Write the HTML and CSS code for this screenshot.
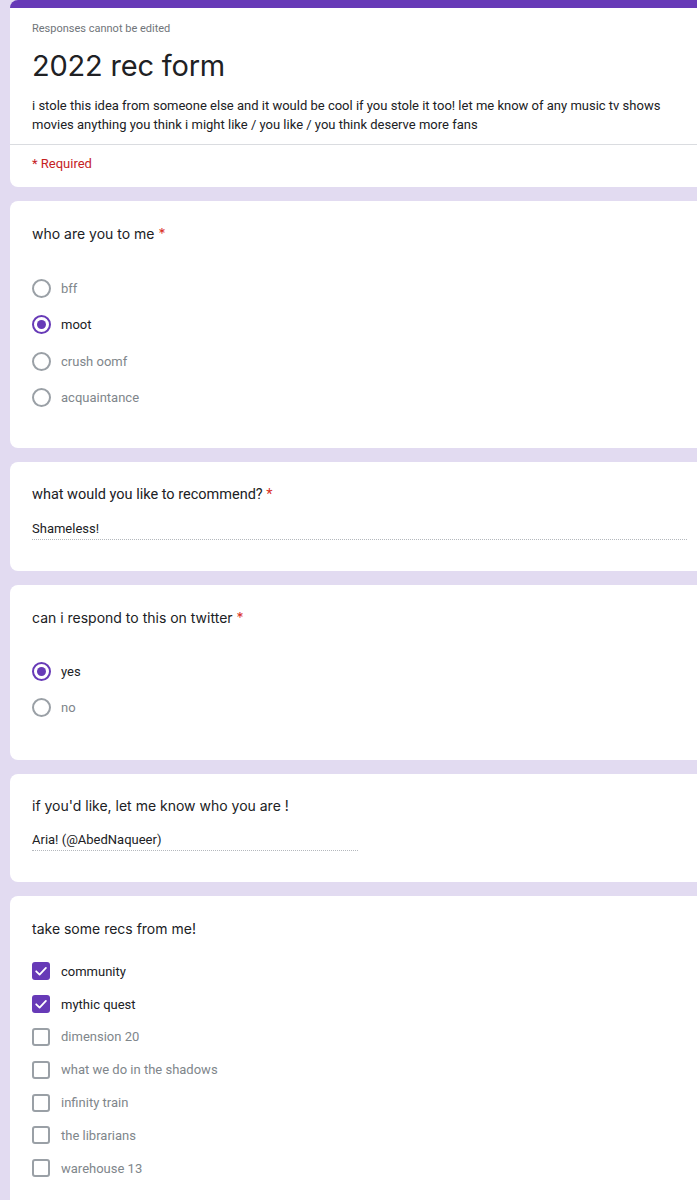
FILE: index.html
```html
<!DOCTYPE html>
<html>
<head>
<meta charset="utf-8">
<link rel="stylesheet" href="styles.css">
</head>
<body>
<main class="form">
  <section class="card card-head">
    <div class="head-top">
      <p class="note">Responses cannot be edited</p>
      <h1 class="title">2022 rec form</h1>
      <p class="desc">i stole this idea from someone else and it would be cool if you stole it too! let me know of any music tv shows movies anything you think i might like / you like / you think deserve more fans</p>
    </div>
    <div class="head-bottom">
      <p class="required">* Required</p>
    </div>
  </section>

  <section class="card q-radio q-who">
    <h2 class="question">who are you to me <span class="star">*</span></h2>
    <ul class="options">
      <li class="option"><span class="radio"></span><span class="label">bff</span></li>
      <li class="option selected"><span class="radio"></span><span class="label">moot</span></li>
      <li class="option"><span class="radio"></span><span class="label">crush oomf</span></li>
      <li class="option"><span class="radio"></span><span class="label">acquaintance</span></li>
    </ul>
  </section>

  <section class="card q-text q-rec">
    <h2 class="question roboto">what would you like to recommend? <span class="star">*</span></h2>
    <div class="answer long">Shameless!</div>
  </section>

  <section class="card q-radio q-twitter">
    <h2 class="question">can i respond to this on twitter <span class="star">*</span></h2>
    <ul class="options">
      <li class="option selected"><span class="radio"></span><span class="label">yes</span></li>
      <li class="option"><span class="radio"></span><span class="label">no</span></li>
    </ul>
  </section>

  <section class="card q-text q-who2">
    <h2 class="question">if you'd like, let me know who you are !</h2>
    <div class="answer short">Aria! (@AbedNaqueer)</div>
  </section>

  <section class="card q-check">
    <h2 class="question">take some recs from me!</h2>
    <ul class="checks">
      <li class="check checked"><span class="box"><svg viewBox="0 0 18 18" width="18" height="18"><path d="M4.2 9.3 L7.6 12.6 L13.9 5.9" fill="none" stroke="#fff" stroke-width="1.8" stroke-linecap="round" stroke-linejoin="round"/></svg></span><span class="label">community</span></li>
      <li class="check checked"><span class="box"><svg viewBox="0 0 18 18" width="18" height="18"><path d="M4.2 9.3 L7.6 12.6 L13.9 5.9" fill="none" stroke="#fff" stroke-width="1.8" stroke-linecap="round" stroke-linejoin="round"/></svg></span><span class="label">mythic quest</span></li>
      <li class="check"><span class="box"></span><span class="label">dimension 20</span></li>
      <li class="check"><span class="box"></span><span class="label">what we do in the shadows</span></li>
      <li class="check"><span class="box"></span><span class="label">infinity train</span></li>
      <li class="check"><span class="box"></span><span class="label">the librarians</span></li>
      <li class="check"><span class="box"></span><span class="label">warehouse 13</span></li>
    </ul>
  </section>
</main>
</body>
</html>
```

FILE: styles.css
```css
* { box-sizing: border-box; }
html, body { margin: 0; padding: 0; }
body {
  background: #e2dbf1;
  overflow: hidden;
  font-family: Roboto, "Liberation Sans", sans-serif;
  color: #202124;
}
p, h1, h2, ul { margin: 0; padding: 0; }
ul { list-style: none; }

.form {
  display: flex;
  flex-direction: column;
  gap: 14px;
  padding-left: 10px;
  margin-right: -12px;
}

.card {
  background: #fff;
  border-radius: 8px;
  padding: 0 22px;
}

.card-head {
  border-top: 8px solid #673ab7;
  padding: 0;
}
.head-top {
  padding: 14px 22px 0;
  border-bottom: 1px solid #dadce0;
  height: 137px;
}
.note {
  font-size: 11px;
  line-height: 14px;
  color: #70757a;
}
.title {
  font-family: Inter, "Open Sans", sans-serif;
  font-weight: 400;
  font-size: 29px;
  line-height: 36px;
  margin-top: 12px;
  letter-spacing: -0.2px;
  color: #202124;
}
.desc {
  font-size: 13px;
  line-height: 19px;
  margin-top: 12px;
  color: #202124;
  padding-right: 20px;
}
.head-bottom {
  padding: 10px 22px 0;
  height: 42px;
}
.required {
  font-size: 13px;
  line-height: 18px;
  color: #c5221f;
}

.question {
  font-family: Inter, "Open Sans", sans-serif;
  font-weight: 400;
  font-size: 14px;
  line-height: 20px;
  color: #202124;
}
.question.roboto {
  font-family: Roboto, sans-serif;
  font-size: 14.5px;
}
.star { color: #d93025; }

.q-radio { padding-top: 23px; padding-bottom: 32px; }
.options { margin-top: 26px; }
.option {
  display: flex;
  align-items: center;
  height: 36.5px;
}
.radio {
  width: 19px;
  height: 19px;
  border: 2px solid #9aa0a6;
  border-radius: 50%;
  flex: none;
  position: relative;
}
.option.selected .radio {
  border-color: #673ab7;
}
.option.selected .radio::after {
  content: "";
  position: absolute;
  left: 50%;
  top: 50%;
  width: 9px;
  height: 9px;
  margin: -4.5px 0 0 -4.5px;
  border-radius: 50%;
  background: #673ab7;
}
.label {
  margin-left: 10px;
  font-size: 13px;
  color: #80868b;
}
.check .label { margin-left: 11px; }
.option.selected .label,
.check.checked .label { color: #202124; }

.q-twitter { padding-bottom: 34px; }
.q-twitter .options { margin-top: 25px; }

.q-text { padding-top: 22px; padding-bottom: 32px; }
.q-rec { padding-top: 23px; padding-bottom: 31px; }
.answer {
  margin-top: 15px;
  font-size: 13px;
  line-height: 18px;
  padding-bottom: 1px;
  border-bottom: 1px dotted #b4b8bd;
  color: #202124;
}
.answer.short { width: 326px; }
.q-who2 { padding-top: 22px; padding-bottom: 31px; }

.q-check { padding-top: 23px; padding-bottom: 30px; }
.checks { margin-top: 16px; }
.check {
  display: flex;
  align-items: center;
  height: 32.8px;
}
.box {
  width: 18px;
  height: 18px;
  border: 2px solid #9aa0a6;
  border-radius: 3px;
  flex: none;
  display: flex;
  align-items: center;
  justify-content: center;
}
.check.checked .box {
  border: none;
  background: #673ab7;
}
```
